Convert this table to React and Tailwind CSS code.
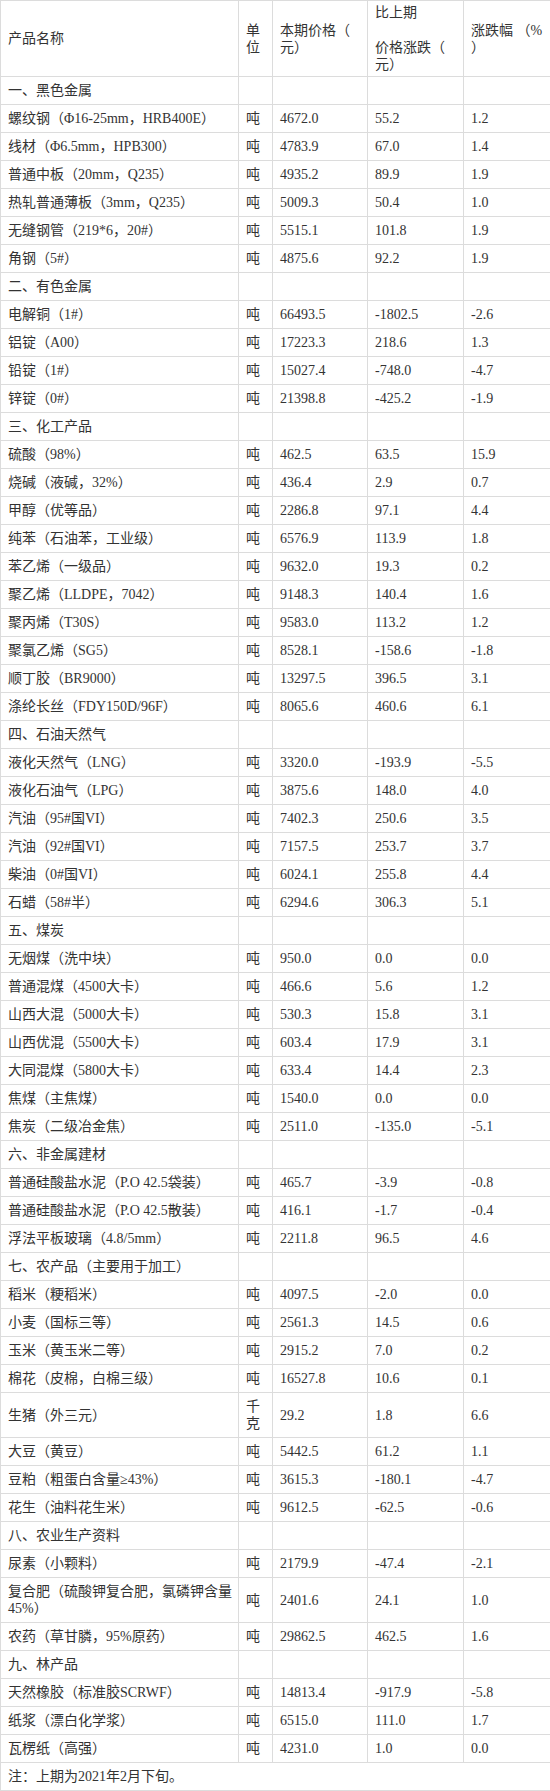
import React from 'react';

const rows = [
  { s: '一、黑色金属' },
  ['螺纹钢（Φ16-25mm，HRB400E）', '吨', '4672.0', '55.2', '1.2'],
  ['线材（Φ6.5mm，HPB300）', '吨', '4783.9', '67.0', '1.4'],
  ['普通中板（20mm，Q235）', '吨', '4935.2', '89.9', '1.9'],
  ['热轧普通薄板（3mm，Q235）', '吨', '5009.3', '50.4', '1.0'],
  ['无缝钢管（219*6，20#）', '吨', '5515.1', '101.8', '1.9'],
  ['角钢（5#）', '吨', '4875.6', '92.2', '1.9'],
  { s: '二、有色金属' },
  ['电解铜（1#）', '吨', '66493.5', '-1802.5', '-2.6'],
  ['铝锭（A00）', '吨', '17223.3', '218.6', '1.3'],
  ['铅锭（1#）', '吨', '15027.4', '-748.0', '-4.7'],
  ['锌锭（0#）', '吨', '21398.8', '-425.2', '-1.9'],
  { s: '三、化工产品' },
  ['硫酸（98%）', '吨', '462.5', '63.5', '15.9'],
  ['烧碱（液碱，32%）', '吨', '436.4', '2.9', '0.7'],
  ['甲醇（优等品）', '吨', '2286.8', '97.1', '4.4'],
  ['纯苯（石油苯，工业级）', '吨', '6576.9', '113.9', '1.8'],
  ['苯乙烯（一级品）', '吨', '9632.0', '19.3', '0.2'],
  ['聚乙烯（LLDPE，7042）', '吨', '9148.3', '140.4', '1.6'],
  ['聚丙烯（T30S）', '吨', '9583.0', '113.2', '1.2'],
  ['聚氯乙烯（SG5）', '吨', '8528.1', '-158.6', '-1.8'],
  ['顺丁胶（BR9000）', '吨', '13297.5', '396.5', '3.1'],
  ['涤纶长丝（FDY150D/96F）', '吨', '8065.6', '460.6', '6.1'],
  { s: '四、石油天然气' },
  ['液化天然气（LNG）', '吨', '3320.0', '-193.9', '-5.5'],
  ['液化石油气（LPG）', '吨', '3875.6', '148.0', '4.0'],
  ['汽油（95#国VI）', '吨', '7402.3', '250.6', '3.5'],
  ['汽油（92#国VI）', '吨', '7157.5', '253.7', '3.7'],
  ['柴油（0#国VI）', '吨', '6024.1', '255.8', '4.4'],
  ['石蜡（58#半）', '吨', '6294.6', '306.3', '5.1'],
  { s: '五、煤炭' },
  ['无烟煤（洗中块）', '吨', '950.0', '0.0', '0.0'],
  ['普通混煤（4500大卡）', '吨', '466.6', '5.6', '1.2'],
  ['山西大混（5000大卡）', '吨', '530.3', '15.8', '3.1'],
  ['山西优混（5500大卡）', '吨', '603.4', '17.9', '3.1'],
  ['大同混煤（5800大卡）', '吨', '633.4', '14.4', '2.3'],
  ['焦煤（主焦煤）', '吨', '1540.0', '0.0', '0.0'],
  ['焦炭（二级冶金焦）', '吨', '2511.0', '-135.0', '-5.1'],
  { s: '六、非金属建材' },
  ['普通硅酸盐水泥（P.O 42.5袋装）', '吨', '465.7', '-3.9', '-0.8'],
  ['普通硅酸盐水泥（P.O 42.5散装）', '吨', '416.1', '-1.7', '-0.4'],
  ['浮法平板玻璃（4.8/5mm）', '吨', '2211.8', '96.5', '4.6'],
  { s: '七、农产品（主要用于加工）' },
  ['稻米（粳稻米）', '吨', '4097.5', '-2.0', '0.0'],
  ['小麦（国标三等）', '吨', '2561.3', '14.5', '0.6'],
  ['玉米（黄玉米二等）', '吨', '2915.2', '7.0', '0.2'],
  ['棉花（皮棉，白棉三级）', '吨', '16527.8', '10.6', '0.1'],
  ['生猪（外三元）', ['千', '克'], '29.2', '1.8', '6.6'],
  ['大豆（黄豆）', '吨', '5442.5', '61.2', '1.1'],
  ['豆粕（粗蛋白含量≥43%）', '吨', '3615.3', '-180.1', '-4.7'],
  ['花生（油料花生米）', '吨', '9612.5', '-62.5', '-0.6'],
  { s: '八、农业生产资料' },
  ['尿素（小颗料）', '吨', '2179.9', '-47.4', '-2.1'],
  [['复合肥（硫酸钾复合肥，氯磷钾含量', '45%）'], '吨', '2401.6', '24.1', '1.0'],
  ['农药（草甘膦，95%原药）', '吨', '29862.5', '462.5', '1.6'],
  { s: '九、林产品' },
  ['天然橡胶（标准胶SCRWF）', '吨', '14813.4', '-917.9', '-5.8'],
  ['纸浆（漂白化学浆）', '吨', '6515.0', '111.0', '1.7'],
  ['瓦楞纸（高强）', '吨', '4231.0', '1.0', '0.0'],
];

const cell = 'border border-[#dcdcdc] px-[7px] py-0 align-middle whitespace-nowrap';

const Lines = ({ v }) =>
  Array.isArray(v) ? (
    <>
      {v.map((t, i) => (
        <div key={i}>{t}</div>
      ))}
    </>
  ) : (
    v
  );

export default function App() {
  return (
    <div className="w-[550px] bg-white">
      <table
        className="w-[550px] table-fixed border-collapse text-[14px] leading-[17px] text-[#333]"
        style={{ fontFamily: '"Liberation Serif", "Noto Sans CJK SC", serif' }}
      >
        <colgroup>
          <col className="w-[238px]" />
          <col className="w-[34px]" />
          <col className="w-[95px]" />
          <col className="w-[96px]" />
          <col className="w-[87px]" />
        </colgroup>
        <tbody>
          <tr className="h-[76px]">
            <td className={cell}>产品名称</td>
            <td className={cell}>
              <div>单</div>
              <div>位</div>
            </td>
            <td className={cell}>
              <div>本期价格（</div>
              <div>元）</div>
            </td>
            <td className={cell}>
              <div className="leading-[18px]">比上期</div>
              <div className="h-[17px]" />
              <div>价格涨跌（</div>
              <div>元）</div>
            </td>
            <td className={cell}>
              <div>涨跌幅 （%</div>
              <div>）</div>
            </td>
          </tr>
          {rows.map((r, i) =>
            r.s ? (
              <tr key={i} className="h-[28px]">
                <td className={cell}>{r.s}</td>
                <td className={cell} />
                <td className={cell} />
                <td className={cell} />
                <td className={cell} />
              </tr>
            ) : (
              <tr key={i} className={Array.isArray(r[0]) || Array.isArray(r[1]) ? 'h-[45px]' : 'h-[28px]'}>
                {r.map((v, j) => (
                  <td key={j} className={cell}>
                    <Lines v={v} />
                  </td>
                ))}
              </tr>
            )
          )}
          <tr className="h-[28px]">
            <td className={cell} colSpan={5}>
              注：上期为2021年2月下旬。
            </td>
          </tr>
        </tbody>
      </table>
    </div>
  );
}
